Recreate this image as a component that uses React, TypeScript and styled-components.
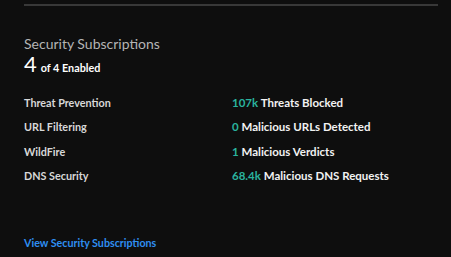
import React from "react";
import styled, { createGlobalStyle } from "styled-components";

const Global = createGlobalStyle`
  html, body { margin: 0; padding: 0; background: #0e0e0e; }
  body { font-family: Lato, "Noto Sans", sans-serif; -webkit-font-smoothing: antialiased; }
`;

const Panel = styled.div`
  width: 451px;
  height: 257px;
  box-sizing: border-box;
  padding: 4px 13px 0 24px;
  background: #0e0e0e;
  display: flex;
  flex-direction: column;
`;

const Divider = styled.div`
  height: 2px;
  background: #383838;
`;

const Title = styled.div`
  margin-top: 29px;
  font-size: 14px;
  line-height: 17px;
  color: #b4b4b4;
`;

const Count = styled.div`
  margin-top: 2px;
  display: flex;
  align-items: baseline;
  gap: 4px;
  color: #ffffff;
  font-weight: 700;
  line-height: 20px;
`;

const Big = styled.span`
  font-size: 22px;
  line-height: 20px;
  font-weight: 400;
`;

const Small = styled.span`
  font-size: 10.8px;
`;

const Rows = styled.div`
  margin-top: 17px;
  display: grid;
  grid-template-columns: 208px 1fr;
  row-gap: 8.3px;
`;

const Label = styled.div`
  font-size: 10.8px;
  line-height: 16px;
  font-weight: 700;
  color: #d8d8d8;
`;

const Value = styled.div`
  font-size: 11.5px;
  line-height: 16px;
  font-weight: 700;
  color: #f2f2f2;
`;

const Num = styled.span`
  color: #2ab39e;
`;

const Link = styled.a`
  margin-top: auto;
  margin-bottom: 8px;
  font-size: 10.7px;
  font-weight: 700;
  color: #2f8ef2;
  text-decoration: none;
`;

const rows = [
  ["Threat Prevention", "107k", "Threats Blocked"],
  ["URL Filtering", "0", "Malicious URLs Detected"],
  ["WildFire", "1", "Malicious Verdicts"],
  ["DNS Security", "68.4k", "Malicious DNS Requests"],
];

export default function App() {
  return (
    <>
      <Global />
      <Panel>
        <Divider />
        <Title>Security Subscriptions</Title>
        <Count>
          <Big>4</Big>
          <Small>of 4 Enabled</Small>
        </Count>
        <Rows>
          {rows.map(([l, n, t]) => (
            <React.Fragment key={l}>
              <Label>{l}</Label>
              <Value>
                <Num>{n}</Num> {t}
              </Value>
            </React.Fragment>
          ))}
        </Rows>
        <Link href="#">View Security Subscriptions</Link>
      </Panel>
    </>
  );
}
